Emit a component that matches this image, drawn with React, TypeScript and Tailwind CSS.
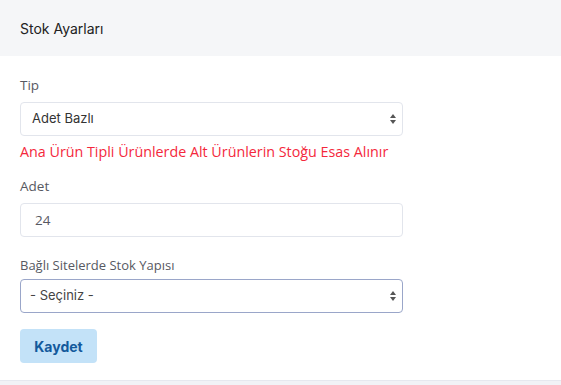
import React from 'react';

const Arrows = () => (
  <svg width="8" height="12" viewBox="0 0 8 12" className="absolute right-[5px] top-1/2 -translate-y-1/2">
    <path d="M4 1L7 5H1z" fill="#555" />
    <path d="M4 11L7 7H1z" fill="#555" />
  </svg>
);

export default function App() {
  return (
    <div className="w-[561px] h-[385px] bg-[#f1f2f6] font-['Open_Sans',sans-serif] text-[#3f4047]">
      <div className="bg-white border-b border-[#e6e8ef]">
        <div className="h-[56px] bg-[#f5f6f8] flex items-center px-5">
          <span className="font-['Inter',sans-serif] text-[14px] text-[#222]">Stok Ayarları</span>
        </div>
        <div className="pl-5 pt-[19px] pb-[17px]">
          <div className="text-[13.5px] leading-[20px] text-[#575962]">Tip</div>
          <div className="relative mt-[7px] w-[383px] h-[34px] border border-[#e2e5ec] rounded-[4px] flex items-center px-[11px]">
            <span className="font-['Inter',sans-serif] text-[13px] text-[#333]">Adet Bazlı</span>
            <Arrows />
          </div>
          <div className="mt-[6px] text-[14.3px] leading-[20px] text-[#f4283c]">
            Ana Ürün Tipli Ürünlerde Alt Ürünlerin Stoğu Esas Alınır
          </div>
          <div className="mt-[14px] text-[13.5px] leading-[20px] text-[#575962]">Adet</div>
          <div className="mt-[7px] w-[383px] h-[34px] border border-[#e2e5ec] rounded-[4px] flex items-center px-[14px]">
            <span className="text-[13.5px] text-[#575962]">24</span>
          </div>
          <div className="mt-[18px] text-[13px] leading-[20px] text-[#575962]">Bağlı Sitelerde Stok Yapısı</div>
          <div className="relative mt-[4px] w-[383px] h-[34px] border border-[#9aa6c9] rounded-[4px] flex items-center px-[9px]">
            <span className="font-['Inter',sans-serif] text-[13px] text-[#444]">- Seçiniz -</span>
            <Arrows />
          </div>
          <button className="mt-[16px] w-[77px] h-[34px] rounded-[4px] bg-[#c3e2f8] text-[#135a9c] text-[14px] font-bold font-['Inter',sans-serif]">
            Kaydet
          </button>
        </div>
      </div>
    </div>
  );
}
